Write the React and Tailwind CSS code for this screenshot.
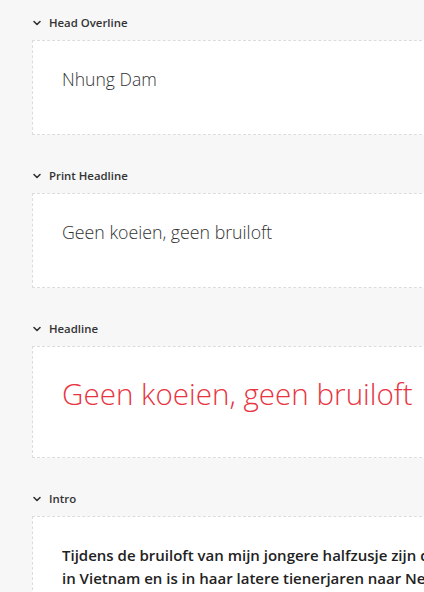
import React from 'react';

const Chevron = () => (
  <svg width="10" height="10" viewBox="0 0 10 10" className="shrink-0 text-[#333]">
    <path d="M2 3.5 L5 6.5 L8 3.5" fill="none" stroke="currentColor" strokeWidth="1.6" strokeLinecap="round" strokeLinejoin="round" />
  </svg>
);

function Field({ label, height, children, className = '' }) {
  return (
    <section className={className}>
      <div className="flex h-4 items-center gap-[7px] pl-[32px]">
        <Chevron />
        <span className="text-[11.4px] font-semibold text-[#333]">{label}</span>
      </div>
      <div
        className={`ml-[32px] mt-[9px] w-[420px] border border-dashed border-[#dcdcdc] bg-white pl-[29px] ${height}`}
      >
        {children}
      </div>
    </section>
  );
}

export default function App() {
  return (
    <div className="h-[592px] overflow-hidden bg-[#f7f7f7] pt-[15px] font-['Open_Sans',sans-serif]">
      <Field label="Head Overline" height="h-[95px] pt-[26px]">
        <p className="text-[17.6px] font-light leading-6 text-[#333]">Nhung Dam</p>
      </Field>
      <Field label="Print Headline" height="h-[95px] pt-[26px]" className="mt-[33px]">
        <p className="text-[17.75px] font-light leading-6 text-[#333]">Geen koeien, geen bruiloft</p>
      </Field>
      <Field label="Headline" height="h-[112px] pt-[27px]" className="mt-[33px]">
        <p className="whitespace-nowrap text-[29.6px] font-light leading-10 text-[#e8343f]">
          Geen koeien, geen bruiloft
        </p>
      </Field>
      <Field label="Intro" height="h-[120px] pt-[27px]" className="mt-[33px]">
        <p className="whitespace-nowrap text-[15px] font-semibold leading-[23px] text-[#222]">
          Tijdens de bruiloft van mijn jongere halfzusje zijn de
          <br />
          in Vietnam en is in haar latere tienerjaren naar Nederland
        </p>
      </Field>
    </div>
  );
}
